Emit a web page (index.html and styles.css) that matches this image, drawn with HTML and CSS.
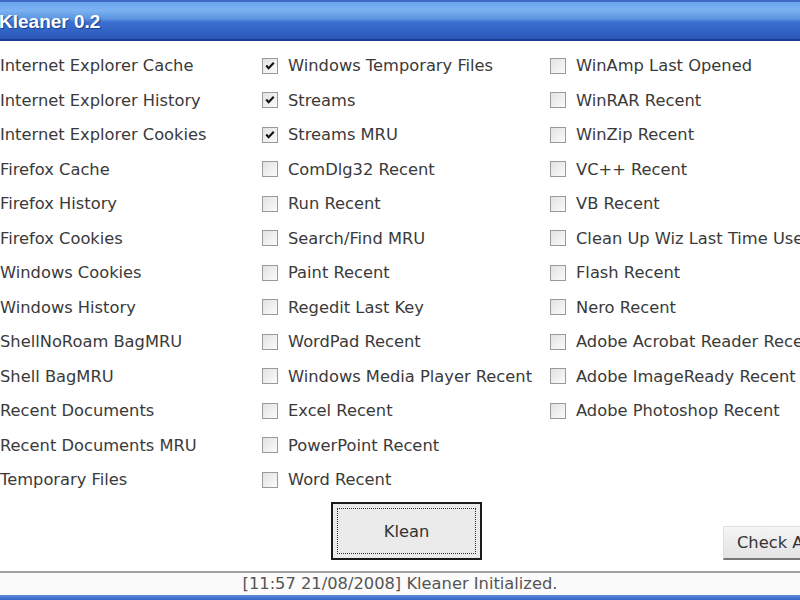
FILE: index.html
```html
<!DOCTYPE html>
<html lang="en">
<head>
  <meta charset="UTF-8" />
  <title>Kleaner 0.2</title>
  <link rel="stylesheet" href="styles.css">
</head>
<body>
  <div class="window">
    <div class="title-bar">Kleaner 0.2</div>

    <div class="options">
      <div class="col">
        <label class="item"><span class="box"></span>Internet Explorer Cache</label>
        <label class="item"><span class="box"></span>Internet Explorer History</label>
        <label class="item"><span class="box"></span>Internet Explorer Cookies</label>
        <label class="item"><span class="box"></span>Firefox Cache</label>
        <label class="item"><span class="box"></span>Firefox History</label>
        <label class="item"><span class="box"></span>Firefox Cookies</label>
        <label class="item"><span class="box"></span>Windows Cookies</label>
        <label class="item"><span class="box"></span>Windows History</label>
        <label class="item"><span class="box"></span>ShellNoRoam BagMRU</label>
        <label class="item"><span class="box"></span>Shell BagMRU</label>
        <label class="item"><span class="box"></span>Recent Documents</label>
        <label class="item"><span class="box"></span>Recent Documents MRU</label>
        <label class="item"><span class="box"></span>Temporary Files</label>
      </div>
      <div class="col">
        <label class="item"><span class="box checked"><svg viewBox="0 0 15 15"><path d="M3.5 7 L6 9.8 L11.5 4" /></svg></span>Windows Temporary Files</label>
        <label class="item"><span class="box checked"><svg viewBox="0 0 15 15"><path d="M3.5 7 L6 9.8 L11.5 4" /></svg></span>Streams</label>
        <label class="item"><span class="box checked"><svg viewBox="0 0 15 15"><path d="M3.5 7 L6 9.8 L11.5 4" /></svg></span>Streams MRU</label>
        <label class="item"><span class="box"></span>ComDlg32 Recent</label>
        <label class="item"><span class="box"></span>Run Recent</label>
        <label class="item"><span class="box"></span>Search/Find MRU</label>
        <label class="item"><span class="box"></span>Paint Recent</label>
        <label class="item"><span class="box"></span>Regedit Last Key</label>
        <label class="item"><span class="box"></span>WordPad Recent</label>
        <label class="item"><span class="box"></span>Windows Media Player Recent</label>
        <label class="item"><span class="box"></span>Excel Recent</label>
        <label class="item"><span class="box"></span>PowerPoint Recent</label>
        <label class="item"><span class="box"></span>Word Recent</label>
      </div>
      <div class="col">
        <label class="item"><span class="box"></span>WinAmp Last Opened</label>
        <label class="item"><span class="box"></span>WinRAR Recent</label>
        <label class="item"><span class="box"></span>WinZip Recent</label>
        <label class="item"><span class="box"></span>VC++ Recent</label>
        <label class="item"><span class="box"></span>VB Recent</label>
        <label class="item"><span class="box"></span>Clean Up Wiz Last Time Used</label>
        <label class="item"><span class="box"></span>Flash Recent</label>
        <label class="item"><span class="box"></span>Nero Recent</label>
        <label class="item"><span class="box"></span>Adobe Acrobat Reader Recent</label>
        <label class="item"><span class="box"></span>Adobe ImageReady Recent</label>
        <label class="item"><span class="box"></span>Adobe Photoshop Recent</label>
      </div>
    </div>

    <div class="actions">
      <button class="klean-btn"><span>Klean</span></button>
      <button class="check-btn">Check All</button>
    </div>

    <div class="status">[11:57 21/08/2008] Kleaner Initialized.</div>
    <div class="bottom-edge"></div>
  </div>
</body>
</html>
```

FILE: styles.css
```css
* {
  margin: 0;
  padding: 0;
  box-sizing: border-box;
}

html, body {
  width: 800px;
  height: 600px;
  overflow: hidden;
  background: #fff;
}

body {
  font-family: "DejaVu Sans", Tahoma, sans-serif;
  font-size: 16.3px;
  color: #3a3a3a;
}

.window {
  width: 880px;
  margin-left: -26px;
}

.title-bar {
  height: 41px;
  padding-left: 25px;
  padding-top: 2px;
  display: flex;
  align-items: center;
  color: #fff;
  font-family: "Liberation Sans", Arial, sans-serif;
  font-weight: bold;
  font-size: 19px;
  text-shadow: 1px 1px 1px #1d3f8a;
  border-top: 2px solid #3d6ac4;
  border-bottom: 2px solid #1c3c94;
  background: linear-gradient(to bottom, #6aa3ea 0%, #7bb3f2 22%, #5d95e2 45%, #3a6fd0 55%, #2f5fc2 85%, #2a55b5 100%);
}

.options {
  display: grid;
  grid-template-columns: 288px 288px 288px;
  padding-top: 7.5px;
}

.col {
  display: flex;
  flex-direction: column;
}

.item {
  height: 34.5px;
  display: flex;
  align-items: center;
  gap: 10px;
  white-space: nowrap;
}

.box {
  width: 16px;
  height: 16px;
  flex-shrink: 0;
  border: 1px solid #9a9a9a;
  background: linear-gradient(135deg, #e2e2e2, #fbfbfb);
  display: flex;
}

.box svg {
  width: 14px;
  height: 14px;
}

.box path {
  fill: none;
  stroke: #111;
  stroke-width: 2.2;
}

.actions {
  display: flex;
  align-items: flex-end;
  padding-left: 357px;
  margin-top: 5px;
  height: 58px;
}

.klean-btn {
  width: 151px;
  height: 58px;
  padding: 4px;
  border: 2px solid #1a1a1a;
  background: #ebebeb;
  font-family: inherit;
  font-size: 16.3px;
  color: #333;
}

.klean-btn span {
  display: flex;
  height: 100%;
  align-items: center;
  justify-content: center;
  border: 1px dotted #333;
}

.check-btn {
  margin-left: 241px;
  width: 110px;
  height: 34px;
  padding-left: 13px;
  text-align: left;
  border: none;
  border-top: 1px solid #e0e0e0;
  border-left: 1px solid #e0e0e0;
  border-bottom: 2px solid #777;
  background: linear-gradient(to bottom, #f4f4f4, #e4e4e4);
  font-family: inherit;
  font-size: 16.3px;
  color: #333;
}

.status {
  margin-top: 11px;
  width: 800px;
  margin-left: 26px;
  height: 24px;
  border-top: 2px solid #a0a0a0;
  background: #fbfbfb;
  text-align: center;
  font-size: 16.3px;
  color: #555;
  line-height: 22px;
}

.bottom-edge {
  height: 6px;
  background: linear-gradient(to bottom, #5b8ee0, #2c5cc0);
}
```
